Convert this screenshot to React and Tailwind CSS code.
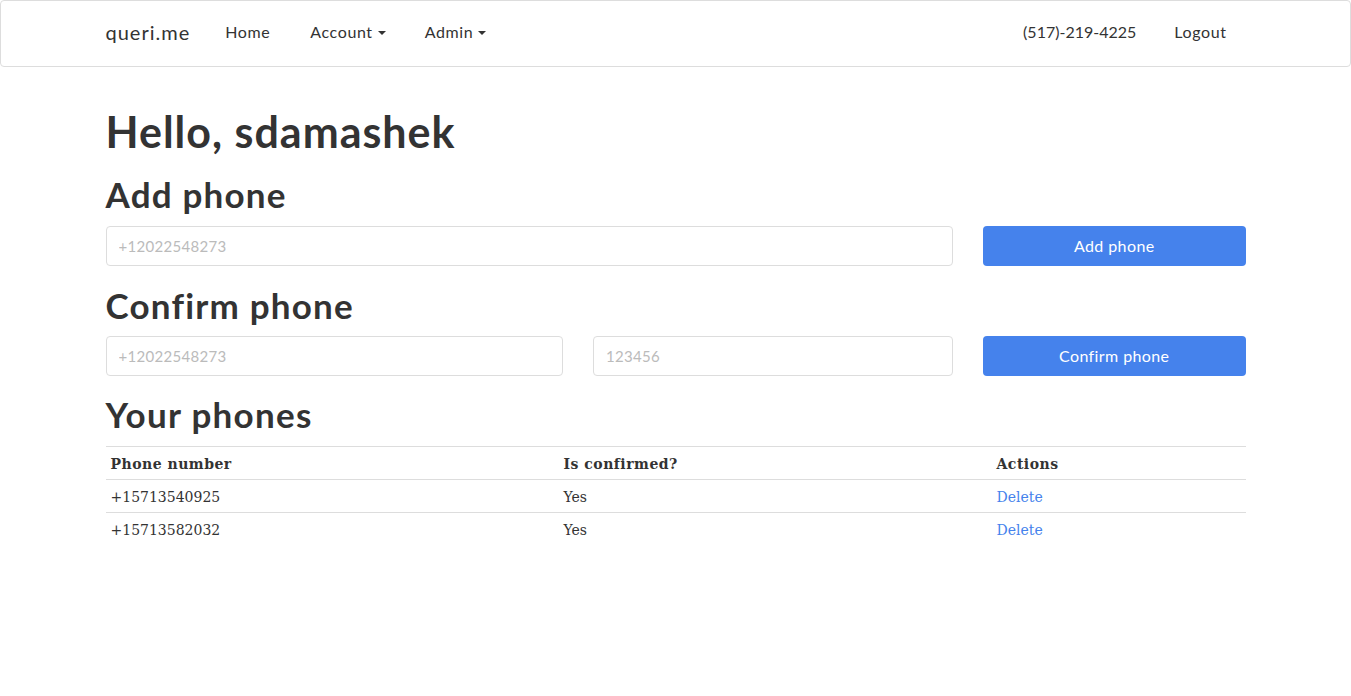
const Caret = () => (
    <span className="inline-block ml-[5px] align-middle w-0 h-0 border-t-[4px] border-t-[#333] border-x-[4px] border-x-transparent" />
);

const phones = [
    { number: '+15713540925', confirmed: 'Yes' },
    { number: '+15713582032', confirmed: 'Yes' },
];

const inputCls =
    'w-full h-[40px] border border-[#ddd] rounded px-[12px] text-[15px] tracking-[0.3px] placeholder:text-[#bbb] outline-none';

const App = () => {
    return (
        <div className="min-h-screen bg-white text-[#333] font-['Lato',sans-serif]">
            <nav className="h-[67px] border border-[#ddd] rounded bg-white">
                <div className="w-[1170px] mx-auto px-[15px] pb-[4px] flex items-center h-full justify-between text-[16px] tracking-[0.6px]">
                    <div className="flex items-center">
                        <span className="text-[20px] tracking-[1px] pr-[15px]">queri.me</span>
                        <a className="px-[20px]">Home</a>
                        <a className="px-[20px]">Account<Caret /></a>
                        <a className="px-[19px]">Admin<Caret /></a>
                    </div>
                    <div className="flex items-center">
                        <a className="px-[19px] tracking-normal">(517)-219-4225</a>
                        <a className="px-[19px]">Logout</a>
                    </div>
                </div>
            </nav>

            <main className="w-[1170px] mx-auto px-[15px]">
                <h1 className="text-[43px] font-bold leading-[1.1] tracking-[1px] mt-[41px] mb-[20px]">Hello, sdamashek</h1>

                <h2 className="text-[35px] font-bold leading-[1.1] tracking-[1.2px] mb-[12px]">Add phone</h2>
                <div className="grid grid-cols-12 -mx-[15px]">
                    <div className="col-span-9 px-[15px]">
                        <input className={inputCls} placeholder="+12022548273" />
                    </div>
                    <div className="col-span-3 px-[15px]">
                        <button className="w-full h-[40px] bg-[#4582ec] text-white rounded text-[16px] tracking-[0.4px]">Add phone</button>
                    </div>
                </div>

                <h2 className="text-[35px] font-bold leading-[1.1] tracking-[1.2px] mt-[20px] mb-[12px]">Confirm phone</h2>
                <div className="grid grid-cols-12 -mx-[15px]">
                    <div className="col-span-5 px-[15px]">
                        <input className={inputCls} placeholder="+12022548273" />
                    </div>
                    <div className="col-span-4 px-[15px]">
                        <input className={inputCls} placeholder="123456" />
                    </div>
                    <div className="col-span-3 px-[15px]">
                        <button className="w-full h-[40px] bg-[#4582ec] text-white rounded text-[16px] tracking-[0.4px]">Confirm phone</button>
                    </div>
                </div>

                <h2 className="text-[35px] font-bold leading-[1.1] tracking-[1.3px] mt-[19px] mb-[12px]">Your phones</h2>
                <table className="w-full border-collapse font-['DejaVu_Serif',serif] text-[14px]">
                    <thead>
                        <tr className="border-t border-b border-[#ddd] h-[33px]">
                            <th className="text-left font-bold tracking-[0.5px] px-[5px] pt-[3px] w-[453px]">Phone number</th>
                            <th className="text-left font-bold tracking-[0.5px] px-[5px] pt-[3px] w-[433px]">Is confirmed?</th>
                            <th className="text-left font-bold tracking-[0.5px] px-[5px] pt-[3px]">Actions</th>
                        </tr>
                    </thead>
                    <tbody>
                        {phones.map((p, i) => (
                            <tr key={p.number} className={i < phones.length - 1 ? 'h-[33px] border-b border-[#ddd]' : 'h-[33px]'}>
                                <td className="px-[5px] pt-[3px]">{p.number}</td>
                                <td className="px-[5px] pt-[3px]">{p.confirmed}</td>
                                <td className="px-[5px] pt-[3px]"><a className="text-[#4582ec]">Delete</a></td>
                            </tr>
                        ))}
                    </tbody>
                </table>
            </main>
        </div>
    );
};

export default App;
